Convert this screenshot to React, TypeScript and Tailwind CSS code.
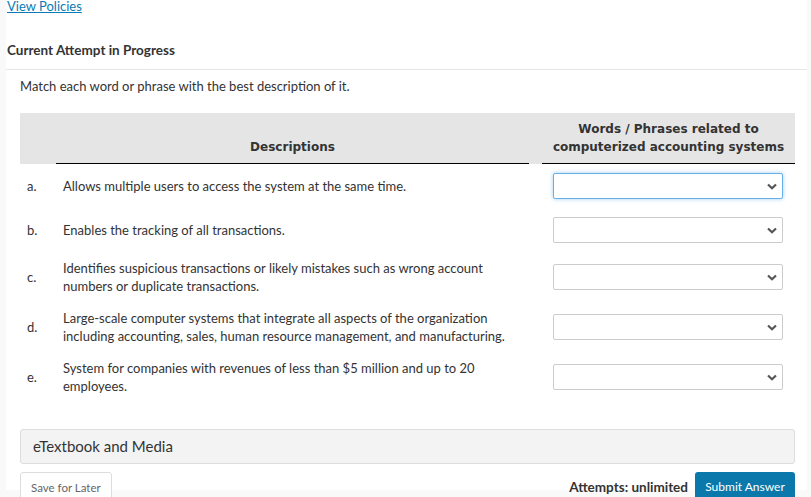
const rows = [
  { letter: "a.", text: "Allows multiple users to access the system at the same time.", focused: true },
  { letter: "b.", text: "Enables the tracking of all transactions." },
  {
    letter: "c.",
    text: "Identifies suspicious transactions or likely mistakes such as wrong account numbers or duplicate transactions.",
  },
  {
    letter: "d.",
    text: "Large-scale computer systems that integrate all aspects of the organization including accounting, sales, human resource management, and manufacturing.",
  },
  {
    letter: "e.",
    text: "System for companies with revenues of less than $5 million and up to 20 employees.",
  },
];

function Select({ focused }: { focused?: boolean }) {
  return (
    <div
      className={
        "my-[2px] h-[26px] w-[230px] bg-white flex items-center justify-end pr-[5px] rounded-[2px] border " +
        (focused ? "border-[#66afe9] shadow-[0_0_4px_rgba(102,175,233,0.6)]" : "border-[#cccccc]")
      }
    >
      <svg width="10" height="7" viewBox="0 0 10 7" className="text-[#555]">
        <path d="M1 1.5 L5 5.2 L9 1.5" fill="none" stroke="currentColor" strokeWidth="2.2" />
      </svg>
    </div>
  );
}

export default function App() {
  return (
    <div className="w-[811px] h-[497px] overflow-hidden bg-[#f9f9f9] font-['Lato',sans-serif] text-[#333]">
      <div className="ml-[6px] w-[801px] h-full bg-white">
        <div className="pl-[1px] -mt-[7px]">
          <a href="#" className="text-[13px] leading-[18px] text-[#0a7bb5] underline">
            View Policies
          </a>
        </div>

        <div className="pl-[1px] pt-[24px] pb-[10px] border-b border-[#e6e6e6]">
          <h2 className="text-[13.5px] font-bold leading-[18px] text-[#333]">Current Attempt in Progress</h2>
        </div>

        <div className="pl-[14px] pr-[12px]">
          <p className="text-[13px] leading-[18px] mt-[7px]">Match each word or phrase with the best description of it.</p>

          <table className="mt-[18px] w-[775px] border-collapse text-[13px]">
            <thead>
              <tr className="bg-[#e5e5e5]">
                <th className="w-[36px]"></th>
                <th className="w-[473px] px-[7px] pb-[7px] pt-[7px] align-bottom border-b border-black font-['DejaVu_Sans',sans-serif] font-bold text-[12px] leading-[18px] text-[#333]">
                  Descriptions
                </th>
                <th className="w-[13px]"></th>
                <th className="px-[7px] py-[7px] align-bottom border-b border-black font-['DejaVu_Sans',sans-serif] font-bold text-[12px] leading-[18px] text-[#333]">
                  Words / Phrases related to
                  <br />
                  computerized accounting systems
                </th>
              </tr>
            </thead>
            <tbody>
              {rows.map((r) => (
                <tr key={r.letter}>
                  <td className="px-[7px] py-[7px] align-middle leading-[18px]">{r.letter}</td>
                  <td className="px-[7px] py-[7px] align-middle leading-[18px]">{r.text}</td>
                  <td></td>
                  <td className="pl-[11px] py-[7px] align-middle">
                    <Select focused={r.focused} />
                  </td>
                </tr>
              ))}
            </tbody>
          </table>

          <div className="mt-[27px] h-[35px] bg-[#f3f3f3] border border-[#dddddd] rounded-[3px] flex items-center pl-[12px]">
            <span className="text-[15px] text-[#333]">eTextbook and Media</span>
          </div>

          <div className="mt-[8px] flex items-start justify-between">
            <button className="h-[34px] px-[10px] pt-[8px] border border-[#dddddd] rounded-[3px] bg-white text-[11.5px] leading-[14px] text-[#666] flex items-start">
              Save for Later
            </button>
            <div className="flex items-start gap-[7px]">
              <span className="text-[13.5px] leading-[18px] font-bold text-[#333] mt-[6px]">Attempts: unlimited</span>
              <button className="h-[34px] w-[100px] pt-[8px] rounded-[3px] bg-[#0a78ab] text-white text-[12px] leading-[14px] flex items-start justify-center">
                Submit Answer
              </button>
            </div>
          </div>
        </div>
      </div>
    </div>
  );
}
